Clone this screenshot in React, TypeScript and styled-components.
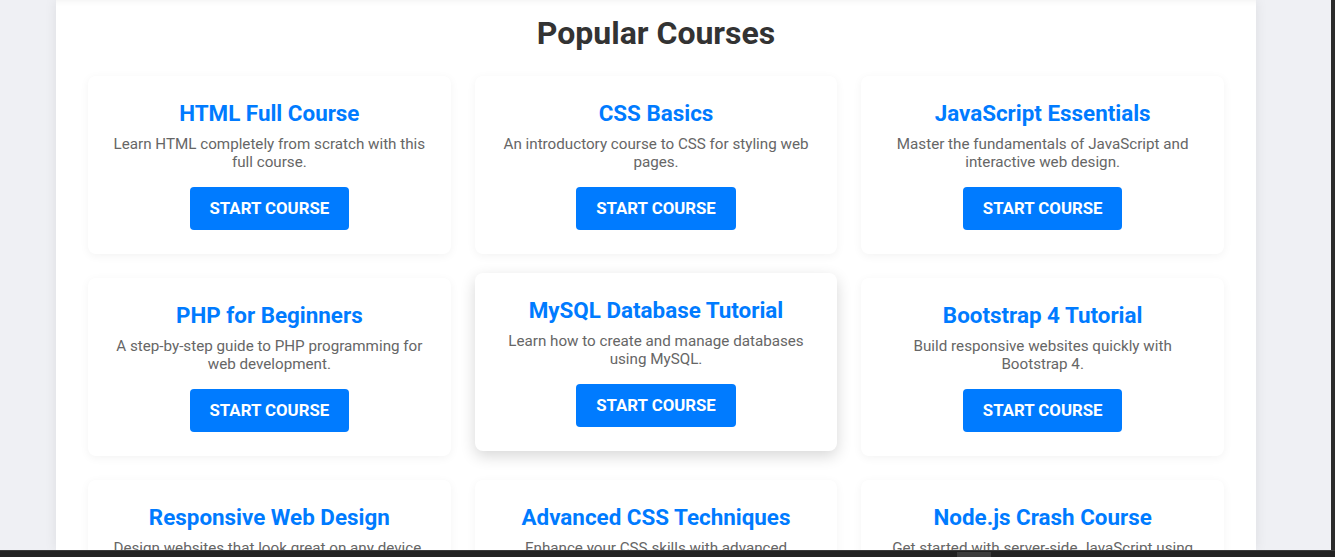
import React from "react";
import styled, { createGlobalStyle } from "styled-components";

const GlobalStyle = createGlobalStyle`
  * { box-sizing: border-box; }
  html, body { margin: 0; padding: 0; }
  body {
    font-family: Roboto, "Liberation Sans", Arial, sans-serif;
    background: #2b2b2b;
    overflow: hidden;
  }
`;

const Window = styled.div`
  height: 557px;
  display: flex;
  flex-direction: column;
  overflow: hidden;
`;

const Viewport = styled.div`
  flex: 1;
  display: flex;
  min-height: 0;
`;

const Page = styled.main`
  flex: 1;
  background: #eff0f4;
  overflow: hidden;
  display: flex;
  justify-content: center;
  padding-left: 56px;
  padding-right: 75px;
`;

const RightEdge = styled.div`
  width: 4px;
  background: #2b2b2b;
`;

const BottomBar = styled.div`
  height: 7px;
  background: #222222;
  border-top: 1px solid #3a3a3a;
  display: flex;
  padding-left: 957px;
`;

const Thumb = styled.div`
  width: 34px;
  height: 100%;
  margin-top: 1px;
  background: #3c3c3c;
`;

const Container = styled.section`
  width: 1200px;
  flex-shrink: 0;
  background: #ffffff;
  padding: 14px 32px 0;
  box-shadow: 0 0 12px rgba(0, 0, 0, 0.08),
    inset 0 7px 6px -6px rgba(0, 0, 0, 0.06);
`;

const Heading = styled.h2`
  margin: 0 0 24px;
  text-align: center;
  font-size: 32px;
  line-height: 38px;
  font-weight: 700;
  color: #333333;
`;

const Grid = styled.div`
  display: grid;
  grid-template-columns: repeat(3, 1fr);
  gap: 24px;
`;

const Card = styled.article<{ $hover?: boolean }>`
  background: #ffffff;
  border-radius: 8px;
  padding: 24px 24px 24px;
  text-align: center;
  box-shadow: ${(p) =>
    p.$hover
      ? "0 5px 15px rgba(0, 0, 0, 0.16)"
      : "0 2px 10px rgba(0, 0, 0, 0.05)"};
  transform: ${(p) => (p.$hover ? "translateY(-5px)" : "none")};
`;

const Title = styled.h3`
  margin: 0 0 9px;
  font-size: 22.4px;
  line-height: 26px;
  font-weight: 700;
  color: #007bff;
`;

const Desc = styled.p`
  margin: 0 0 16px;
  font-size: 15.2px;
  line-height: 18px;
  color: #666666;
`;

const Button = styled.button`
  border: none;
  border-radius: 4px;
  background: #007bff;
  color: #ffffff;
  font-family: inherit;
  font-size: 16.8px;
  font-weight: 700;
  line-height: 19px;
  padding: 12px 20px;
  text-transform: uppercase;
  cursor: pointer;
`;

const courses = [
  { t: "HTML Full Course", d: "Learn HTML completely from scratch with this full course." },
  { t: "CSS Basics", d: "An introductory course to CSS for styling web pages." },
  { t: "JavaScript Essentials", d: "Master the fundamentals of JavaScript and interactive web design." },
  { t: "PHP for Beginners", d: "A step-by-step guide to PHP programming for web development." },
  { t: "MySQL Database Tutorial", d: "Learn how to create and manage databases using MySQL.", hover: true },
  { t: "Bootstrap 4 Tutorial", d: "Build responsive websites quickly with Bootstrap 4." },
  { t: "Responsive Web Design", d: "Design websites that look great on any device." },
  { t: "Advanced CSS Techniques", d: "Enhance your CSS skills with advanced techniques and tricks." },
  { t: "Node.js Crash Course", d: "Get started with server-side JavaScript using Node.js." },
];

export default function App() {
  return (
    <>
      <GlobalStyle />
      <Window>
        <Viewport>
          <Page>
            <Container>
              <Heading>Popular Courses</Heading>
              <Grid>
                {courses.map((c) => (
                  <Card key={c.t} $hover={c.hover}>
                    <Title>{c.t}</Title>
                    <Desc>{c.d}</Desc>
                    <Button>Start Course</Button>
                  </Card>
                ))}
              </Grid>
            </Container>
          </Page>
          <RightEdge />
        </Viewport>
        <BottomBar>
          <Thumb />
        </BottomBar>
      </Window>
    </>
  );
}
